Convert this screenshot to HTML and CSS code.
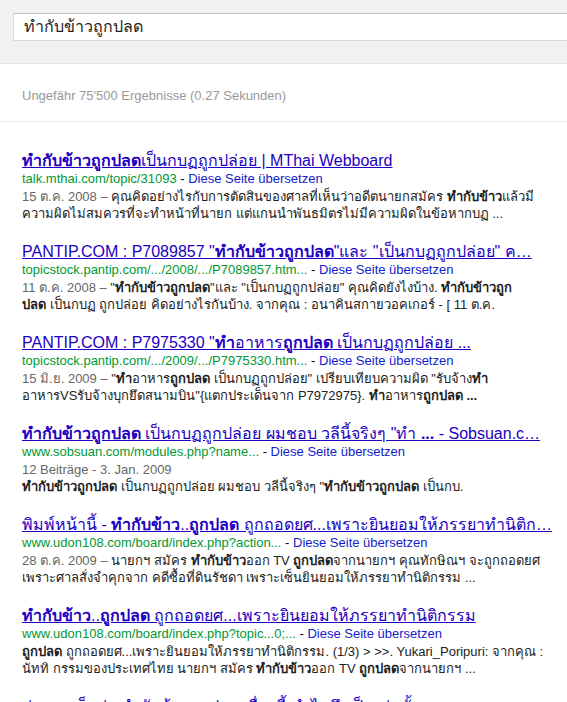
FILE: index.html
```html
<!DOCTYPE html>
<html>
<head>
<meta charset="utf-8">
<link rel="stylesheet" href="styles.css">
</head>
<body>
<div class="header">
  <div class="searchbox">ทำกับข้าวถูกปลด</div>
</div>
<div class="stats">Ungefähr 75'500 Ergebnisse (0.27 Sekunden)</div>
<div class="results">
  <div class="result">
    <a class="title" href="#"><b>ทำกับข้าวถูกปลด</b>เป็นกบฏถูกปล่อย | MThai Webboard</a>
    <div class="cite"><span class="url">talk.mthai.com/topic/31093</span> - <a class="tr" href="#">Diese Seite übersetzen</a></div>
    <div class="snippet"><span class="date">15 ต.ค. 2008 – </span>คุณคิดอย่างไรกับการตัดสินของศาลที่เห็นว่าอดีตนายกสมัคร <b>ทำกับข้าว</b>แล้วมี<br>ความผิดไม่สมควรที่จะทำหน้าที่นายก แต่แกนนำพันธมิตรไม่มีความผิดในข้อหากบฏ ...</div>
  </div>
  <div class="result">
    <a class="title" href="#">PANTIP.COM : P7089857 "<b>ทำกับข้าวถูกปลด</b>"และ "เป็นกบฏถูกปล่อย" ค…</a>
    <div class="cite"><span class="url">topicstock.pantip.com/.../2008/.../P7089857.htm...</span> - <a class="tr" href="#">Diese Seite übersetzen</a></div>
    <div class="snippet"><span class="date">11 ต.ค. 2008 – </span>"<b>ทำกับข้าวถูกปลด</b>"และ "เป็นกบฏถูกปล่อย" คุณคิดยังไงบ้าง. <b>ทำกับข้าวถูก<br>ปลด</b> เป็นกบฏ ถูกปล่อย คิดอย่างไรกันบ้าง. จากคุณ : อนาคินสกายวอคเกอร์ - [ 11 ต.ค.</div>
  </div>
  <div class="result">
    <a class="title" href="#">PANTIP.COM : P7975330 "<b>ทำ</b>อาหาร<b>ถูกปลด</b> เป็นกบฏถูกปล่อย ...</a>
    <div class="cite"><span class="url">topicstock.pantip.com/.../2009/.../P7975330.htm...</span> - <a class="tr" href="#">Diese Seite übersetzen</a></div>
    <div class="snippet"><span class="date">15 มิ.ย. 2009 – </span>"<b>ทำ</b>อาหาร<b>ถูกปลด</b> เป็นกบฏถูกปล่อย" เปรียบเทียบความผิด "รับจ้าง<b>ทำ</b><br>อาหารVSรับจ้างบุกยึดสนามบิน"{แตกประเด็นจาก P7972975}. <b>ทำ</b>อาหาร<b>ถูกปลด ...</b></div>
  </div>
  <div class="result">
    <a class="title" href="#"><b>ทำกับข้าวถูกปลด</b> เป็นกบฏถูกปล่อย ผมชอบ วลีนี้จริงๆ "ทำ <b>...</b> - Sobsuan.c…</a>
    <div class="cite"><span class="url">www.sobsuan.com/modules.php?name...</span> - <a class="tr" href="#">Diese Seite übersetzen</a></div>
    <div class="snippet"><span class="date">12 Beiträge - 3. Jan. 2009</span><br><b>ทำกับข้าวถูกปลด</b> เป็นกบฏถูกปล่อย ผมชอบ วลีนี้จริงๆ "<b>ทำกับข้าวถูกปลด</b> เป็นกบ.</div>
  </div>
  <div class="result">
    <a class="title" href="#">พิมพ์หน้านี้ - <b>ทำกับข้าว</b>..<b>ถูกปลด</b> ถูกถอดยศ...เพราะยินยอมให้ภรรยาทำนิติก…</a>
    <div class="cite"><span class="url">www.udon108.com/board/index.php?action...</span> - <a class="tr" href="#">Diese Seite übersetzen</a></div>
    <div class="snippet"><span class="date">28 ต.ค. 2009 – </span>นายกฯ สมัคร <b>ทำกับข้าว</b>ออก TV <b>ถูกปลด</b>จากนายกฯ คุณทักษิณฯ จะถูกถอดยศ<br>เพราะศาลสั่งจำคุกจาก คดีซื้อที่ดินรัชดา เพราะเซ็นยินยอมให้ภรรยาทำนิติกรรม ...</div>
  </div>
  <div class="result">
    <a class="title" href="#"><b>ทำกับข้าว</b>..<b>ถูกปลด</b> ถูกถอดยศ...เพราะยินยอมให้ภรรยาทำนิติกรรม</a>
    <div class="cite"><span class="url">www.udon108.com/board/index.php?topic...0;...</span> - <a class="tr" href="#">Diese Seite übersetzen</a></div>
    <div class="snippet"><b>ถูกปลด</b> ถูกถอดยศ...เพราะยินยอมให้ภรรยาทำนิติกรรม. (1/3) &gt; &gt;&gt;. Yukari_Poripuri: จากคุณ :<br>นัททิ กรรมของประเทศไทย นายกฯ สมัคร <b>ทำกับข้าว</b>ออก TV <b>ถูกปลด</b>จากนายกฯ ...</div>
  </div>
  <div class="result">
    <a class="title" href="#">ก่อนจะเห็นว่า ทำกับข้าวถูกปลด เรื่องนี้ ทำไมถึงเป็นเช่นนั้น</a>
  </div>
</div>
</body>
</html>
```
FILE: styles.css
```css
html, body {
  margin: 0;
  padding: 0;
  background: #fff;
  font-family: Arial, "Liberation Sans", Tahoma, sans-serif;
  overflow: hidden;
}
.header {
  height: 64px;
  background: #f1f1f1;
  border-bottom: 1px solid #e5e5e5;
  padding: 13px 0 0 13px;
  box-sizing: border-box;
  overflow: hidden;
}
.searchbox {
  margin-right: -20px;
  height: 28px;
  box-sizing: border-box;
  background: #fff;
  border: 1px solid #d9d9d9;
  border-top-color: #c0c0c0;
  padding-left: 10px;
  font-size: 16px;
  line-height: 26px;
  color: #222;
}
.stats {
  margin-top: 24px;
  padding-left: 22px;
  font-size: 13px;
  line-height: 16px;
  color: #999;
  padding-bottom: 17px;
  border-bottom: 1px solid #ebebeb;
}
.results {
  padding-left: 22px;
  padding-top: 29px;
}
.result {
  margin-bottom: 20px;
  white-space: nowrap;
}
.title {
  display: inline-block;
  font-size: 16px;
  line-height: 20px;
  color: #2200c1;
  text-decoration: underline;
}
.cite {
  font-size: 13px;
  line-height: 16px;
  margin-bottom: 1px;
}
.url {
  color: #093;
}
.tr {
  color: #1122cc;
  text-decoration: none;
}
.snippet {
  font-size: 13px;
  line-height: 17px;
  color: #222;
}
.date {
  color: #666;
}
```
